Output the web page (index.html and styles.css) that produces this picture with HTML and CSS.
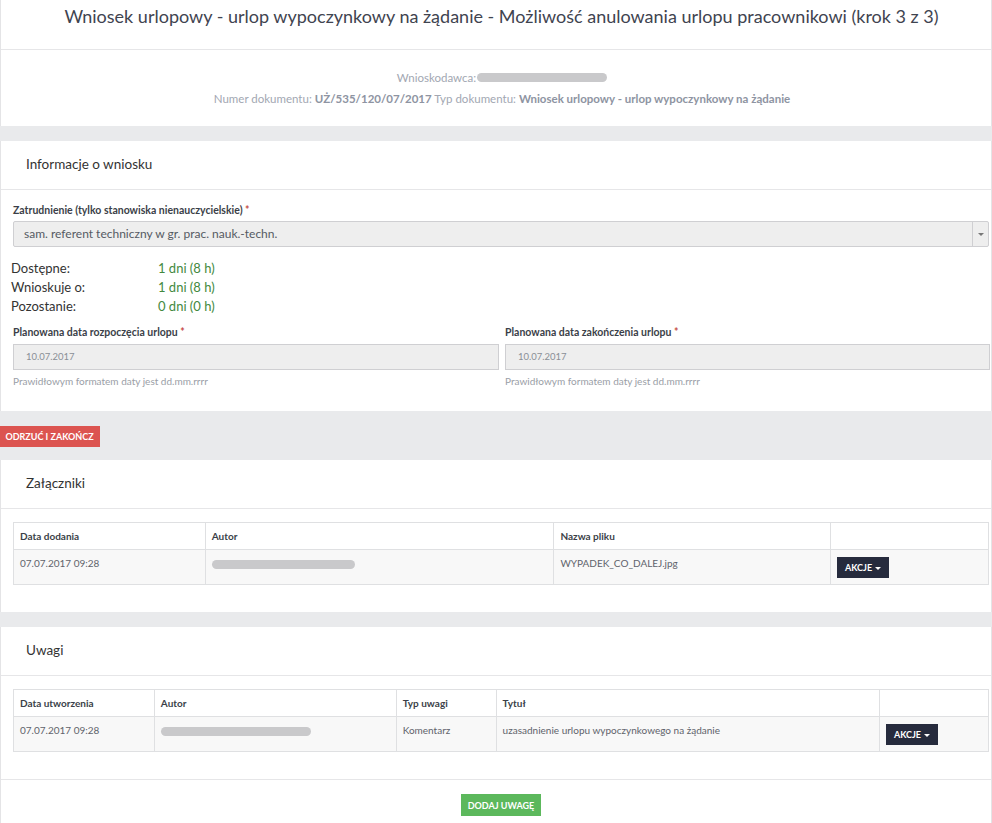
FILE: index.html
```html
<!DOCTYPE html>
<html lang="pl">
<head>
<meta charset="utf-8">
<title>Wniosek urlopowy</title>
<link rel="stylesheet" href="styles.css">
</head>
<body>
<div class="page">
  <div class="panel title-panel">
    <h1>Wniosek urlopowy - urlop wypoczynkowy na żądanie - Możliwość anulowania urlopu pracownikowi (krok 3 z 3)</h1>
  </div>
  <div class="panel meta">
    <div class="meta-line">Wnioskodawca:<span class="redact redact-meta"></span></div>
    <div class="meta-line">Numer dokumentu: <b>UŻ/535/120/07/2017</b> Typ dokumentu: <b>Wniosek urlopowy - urlop wypoczynkowy na żądanie</b></div>
  </div>
  <div class="gap"></div>

  <section class="panel">
    <div class="panel-head">Informacje o wniosku</div>
    <div class="panel-body info-body">
      <label class="field-label">Zatrudnienie (tylko stanowiska nienauczycielskie) <span class="req">*</span></label>
      <div class="select">
        <span class="select-value">sam. referent techniczny w gr. prac. nauk.-techn.</span>
        <span class="select-arrow"><span class="caret-gray"></span></span>
      </div>
      <div class="stats">
        <span class="stat-label">Dostępne:</span><span class="stat-value">1 dni (8 h)</span>
        <span class="stat-label">Wnioskuje o:</span><span class="stat-value">1 dni (8 h)</span>
        <span class="stat-label">Pozostanie:</span><span class="stat-value">0 dni (0 h)</span>
      </div>
      <div class="dates">
        <div class="date-field">
          <label class="field-label">Planowana data rozpoczęcia urlopu <span class="req">*</span></label>
          <div class="input">10.07.2017</div>
          <div class="help">Prawidłowym formatem daty jest dd.mm.rrrr</div>
        </div>
        <div class="date-field">
          <label class="field-label">Planowana data zakończenia urlopu <span class="req">*</span></label>
          <div class="input">10.07.2017</div>
          <div class="help">Prawidłowym formatem daty jest dd.mm.rrrr</div>
        </div>
      </div>
    </div>
  </section>

  <div class="gap gap-actions">
    <button class="btn btn-red">ODRZUĆ I ZAKOŃCZ</button>
  </div>

  <section class="panel">
    <div class="panel-head">Załączniki</div>
    <div class="panel-body table-body">
      <table class="grid grid-att">
        <thead>
          <tr><th class="c1">Data dodania</th><th class="c2">Autor</th><th class="c3">Nazwa pliku</th><th class="c4"></th></tr>
        </thead>
        <tbody>
          <tr>
            <td>07.07.2017 09:28</td>
            <td><span class="redact redact-a1"></span></td>
            <td>WYPADEK_CO_DALEJ.jpg</td>
            <td class="act"><button class="btn btn-dark">AKCJE <span class="caret"></span></button></td>
          </tr>
        </tbody>
      </table>
    </div>
  </section>

  <div class="gap"></div>

  <section class="panel">
    <div class="panel-head">Uwagi</div>
    <div class="panel-body table-body">
      <table class="grid grid-notes">
        <thead>
          <tr><th class="c1">Data utworzenia</th><th class="c2">Autor</th><th class="c3">Typ uwagi</th><th class="c4">Tytuł</th><th class="c5"></th></tr>
        </thead>
        <tbody>
          <tr>
            <td>07.07.2017 09:28</td>
            <td><span class="redact redact-a2"></span></td>
            <td>Komentarz</td>
            <td>uzasadnienie urlopu wypoczynkowego na żądanie</td>
            <td class="act"><button class="btn btn-dark">AKCJE <span class="caret"></span></button></td>
          </tr>
        </tbody>
      </table>
    </div>
    <div class="panel-foot">
      <button class="btn btn-green">DODAJ UWAGĘ</button>
    </div>
  </section>
</div>
</body>
</html>
```

FILE: styles.css
```css
* { box-sizing: border-box; }
html, body { margin: 0; padding: 0; background: #fff; }
body {
  font-family: "Lato", "Open Sans", sans-serif;
  color: #333;
  font-size: 12px;
}
.page {
  width: 992px;
  min-height: 823px;
  border-left: 1px solid #e4e4e6;
  border-right: 1px solid #e4e4e6;
}
.panel { background: #fff; }
.title-panel {
  height: 50px;
  border-bottom: 1px solid #e6e6e8;
  padding: 3px 0 0 11px;
}
.title-panel h1 {
  margin: 0;
  text-align: center;
  font-weight: 400;
  font-size: 18px;
  line-height: 26px;
  color: #3f4450;
}
.meta {
  height: 76px;
  padding: 17px 0 0 12px;
  text-align: center;
  color: #a2a7b2;
  font-size: 11.5px;
}
.meta-line { line-height: 21px; }
.meta b { color: #8e94a2; font-weight: 700; }
.redact {
  display: inline-block;
  height: 9px;
  border-radius: 5px;
  background: #c9c9cb;
  vertical-align: middle;
}
.redact-meta { width: 130px; margin-left: 1px; margin-top: -3px; }
.redact-a1 { width: 143px; margin-top: 0; }
.redact-a2 { width: 150px; }
.gap { height: 15px; background: #e9eaec; margin: 0 -1px; }
.gap-actions { height: 49px; padding-top: 15px; }
.panel-head {
  height: 49px;
  line-height: 46px;
  padding-left: 25px;
  font-size: 13.5px;
  color: #333;
  border-bottom: 1px solid #e6e6e8;
}
.panel-body { padding: 10px 2px 0 12px; }
.info-body { height: 221px; padding-top: 12px; }
.field-label {
  display: block;
  font-size: 10.5px;
  font-weight: 700;
  color: #3b3f48;
  line-height: 16px;
  margin-bottom: 3px;
}
.req { color: #c64a44; }
.select {
  display: flex;
  height: 26px;
  border: 1px solid #cfcfd2;
  border-radius: 2px;
  background: #eeeeee;
}
.select-value {
  flex: 1;
  padding-left: 10px;
  line-height: 24px;
  font-size: 12px;
  color: #555a63;
}
.select-arrow {
  width: 16px;
  border-left: 1px solid #cfcfd2;
  display: flex;
  align-items: center;
  justify-content: center;
}
.caret-gray {
  width: 0; height: 0;
  border-left: 3px solid transparent;
  border-right: 3px solid transparent;
  border-top: 3px solid #777;
}
.stats {
  display: grid;
  grid-template-columns: 147px auto;
  justify-content: start;
  margin: 12px 0 0 -2px;
  font-size: 13px;
  line-height: 19px;
  color: #333;
}
.stat-value { color: #43893e; }
.dates {
  display: grid;
  grid-template-columns: 486px 485px;
  column-gap: 6px;
  margin-top: 8px;
}
.dates .field-label { margin-bottom: 4px; }
.input {
  height: 26px;
  border: 1px solid #cfcfd2;
  background: #eeeeee;
  padding-left: 12px;
  line-height: 24px;
  font-size: 9.5px;
  color: #8a8e96;
}
.help {
  margin-top: 4px;
  font-size: 10px;
  line-height: 14px;
  color: #9a9ea6;
}
.btn {
  border: 0;
  font-family: inherit;
  font-weight: 700;
  font-size: 9px;
  color: #fff;
  cursor: pointer;
}
.btn-red {
  display: block;
  height: 21px;
  width: 101px;
  padding: 0;
  background: #dc5450;
  margin-left: -1px;
}
.table-body { padding: 13px 2px 27px 12px; }
.grid {
  width: 976px;
  border-collapse: collapse;
  font-size: 10px;
}
.grid th, .grid td {
  border: 1px solid #dfe0e2;
  text-align: left;
  vertical-align: top;
  padding: 0 6px;
}
.grid th {
  height: 27px;
  vertical-align: middle;
  font-weight: 700;
  color: #3b3f48;
}
.grid td {
  height: 35px;
  padding-top: 7px;
  background: #f8f8f8;
  color: #5f636b;
}
.grid td.act { padding-top: 7px; }
.grid-att .c1 { width: 192px; }
.grid-att .c2 { width: 349px; }
.grid-att .c3 { width: 277px; }
.grid-att .c4 { width: 158px; }
.grid-notes .c1 { width: 141px; }
.grid-notes .c2 { width: 242px; }
.grid-notes .c3 { width: 100px; }
.grid-notes .c4 { width: 384px; }
.grid-notes .c5 { width: 109px; }
.btn-dark {
  height: 21px;
  width: 52px;
  padding: 0;
  background: #262b3d;
  font-size: 9px;
  line-height: 21px;
}
.caret {
  display: inline-block;
  width: 0; height: 0;
  border-left: 3px solid transparent;
  border-right: 3px solid transparent;
  border-top: 3px solid #fff;
  vertical-align: middle;
  margin-left: 1px;
}
.panel-foot {
  border-top: 1px solid #e6e6e8;
  padding-top: 14px;
  text-align: center;
}
.btn-green {
  height: 22px;
  width: 80px;
  padding: 0;
  background: #5cb85c;
  margin-left: 10px;
}
```
